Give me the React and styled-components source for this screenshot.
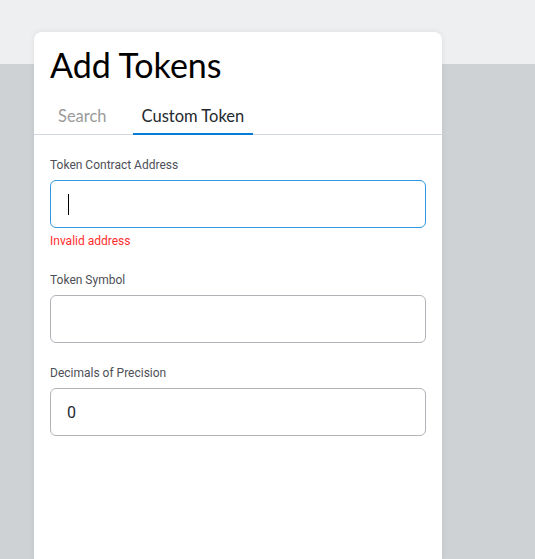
import React, { useState } from 'react'
import styled, { createGlobalStyle } from 'styled-components'

const GlobalStyle = createGlobalStyle`
html, body {
  margin: 0;
  padding: 0;
  height: 100%;
}
body {
  background: linear-gradient(to bottom, #eeeff1 0px, #eeeff1 64px, #ced2d5 64px, #ced2d5 100%);
  font-family: Lato, "Noto Sans", sans-serif;
  overflow: hidden;
}
`

const Page = styled.div`
  padding: 32px 0 0 34px;
  height: 559px;
  box-sizing: border-box;
`

const Card = styled.div`
  width: 408px;
  height: 100%;
  background: #fff;
  border-radius: 8px 8px 0 0;
  box-shadow: 0 0 6px rgba(0, 0, 0, 0.08);
`

const Header = styled.div`
  padding: 13px 16px 0;
`

const Title = styled.h1`
  margin: 0;
  font-family: Lato, sans-serif;
  font-weight: 400;
  font-size: 34px;
  line-height: 40px;
  color: #000;
`

const TabBar = styled.div`
  display: flex;
  margin-top: 21px;
  padding: 0 15px;
  border-bottom: 1px solid #d2d8dd;
`

const Tab = styled.div`
  padding: 0 9px 7px;
  margin-right: ${(p) => (p.$first ? '17px' : '0')};
  font-size: 16.5px;
  line-height: 20px;
  color: ${(p) => (p.$active ? '#24292e' : '#9b9b9b')};
  border-bottom: 2px solid ${(p) => (p.$active ? '#037dd6' : 'transparent')};
  margin-bottom: -1px;
  cursor: pointer;
`

const Form = styled.div`
  padding: 23px 16px 0;
  display: flex;
  flex-direction: column;
`

const Field = styled.div`
  display: flex;
  flex-direction: column;
  margin-bottom: ${(p) => p.$gap || '24px'};
`

const Label = styled.label`
  font-family: Roboto, sans-serif;
  font-size: 12px;
  line-height: 14px;
  color: #4d4f57;
  margin-bottom: 8px;
`

const InputBox = styled.div`
  height: 48px;
  box-sizing: border-box;
  border: 1.5px solid ${(p) => (p.$focused ? '#2f9ae0' : '#b0b4b9')};
  border-radius: 6px;
  display: flex;
  align-items: center;
  padding: 0 16px;
`

const Input = styled.input`
  border: none;
  outline: none;
  width: 100%;
  font-family: Roboto, sans-serif;
  font-size: 16px;
  color: #24292e;
  background: transparent;
  padding: 0;
`

const Caret = styled.span`
  display: block;
  width: 1px;
  height: 21px;
  background: #000;
  margin-left: 1px;
`

const ErrorText = styled.div`
  font-family: Roboto, sans-serif;
  font-size: 12px;
  line-height: 14px;
  color: #ff2d2d;
  margin-top: 6px;
`

const App = () => {
  const [symbol, setSymbol] = useState('')
  const [decimals, setDecimals] = useState('0')

  return (
    <>
      <GlobalStyle />
      <Page>
        <Card>
          <Header>
            <Title>Add Tokens</Title>
          </Header>
          <TabBar>
            <Tab $first>Search</Tab>
            <Tab $active>Custom Token</Tab>
          </TabBar>
          <Form>
            <Field $gap="25px">
              <Label>Token Contract Address</Label>
              <InputBox $focused>
                <Caret />
              </InputBox>
              <ErrorText>Invalid address</ErrorText>
            </Field>
            <Field $gap="23px">
              <Label>Token Symbol</Label>
              <InputBox>
                <Input value={symbol} onChange={(e) => setSymbol(e.target.value)} />
              </InputBox>
            </Field>
            <Field>
              <Label>Decimals of Precision</Label>
              <InputBox>
                <Input value={decimals} onChange={(e) => setDecimals(e.target.value)} />
              </InputBox>
            </Field>
          </Form>
        </Card>
      </Page>
    </>
  )
}

export default App
